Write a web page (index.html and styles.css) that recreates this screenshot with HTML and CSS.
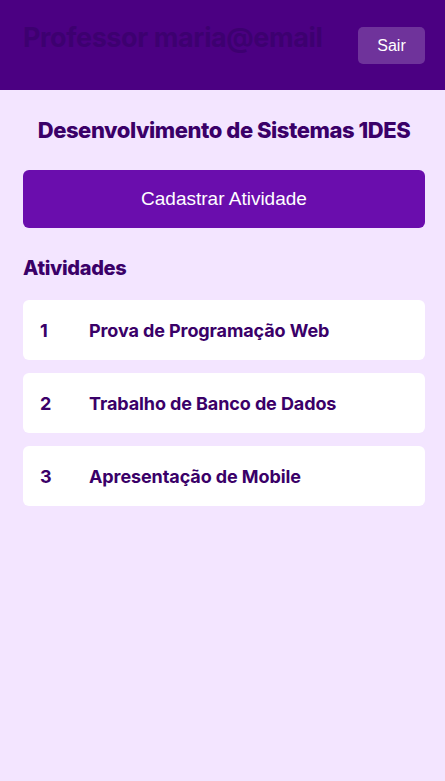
FILE: index.html
```html
<!DOCTYPE html>
<html lang="pt-BR">
<head>
<meta charset="utf-8">
<title>Professor</title>
<link rel="stylesheet" href="styles.css">
</head>
<body>
<header class="topbar">
  <h1 class="topbar-title">Professor maria@email</h1>
  <button class="btn-sair">Sair</button>
</header>
<main class="content">
  <h2 class="turma-title">Desenvolvimento de Sistemas 1DES</h2>
  <button class="btn-cadastrar">Cadastrar Atividade</button>
  <h3 class="section-title">Atividades</h3>
  <ul class="lista">
    <li class="card"><span class="card-num">1</span><span class="card-name">Prova de Programação Web</span></li>
    <li class="card"><span class="card-num">2</span><span class="card-name">Trabalho de Banco de Dados</span></li>
    <li class="card"><span class="card-num">3</span><span class="card-name">Apresentação de Mobile</span></li>
  </ul>
</main>
</body>
</html>
```
FILE: styles.css
```css
* { box-sizing: border-box; }
html, body { margin: 0; padding: 0; }
body {
  background: #f3e5ff;
  font-family: "Inter", "Noto Sans", sans-serif;
  min-height: 781px;
}
.topbar {
  background: #4b0082;
  height: 90px;
  display: flex;
  align-items: center;
  justify-content: space-between;
  padding: 0 20px 0 23px;
}
.topbar-title {
  margin: 0 0 16px 0;
  font-size: 27px;
  font-weight: 700;
  letter-spacing: -0.4px;
  color: #3d0070;
}
.btn-sair {
  width: 67px;
  height: 37px;
  border: none;
  border-radius: 5px;
  background: rgba(255,255,255,0.2);
  color: #fff;
  font-family: "Liberation Sans", Arial, sans-serif;
  font-size: 16px;
  margin-top: 1px;
}
.content {
  padding: 0 20px 0 23px;
  display: flex;
  flex-direction: column;
}
.turma-title {
  margin: 26px 0 0;
  text-align: center;
  font-size: 22px;
  font-weight: 800;
  letter-spacing: -0.45px;
  color: #3a0068;
  line-height: 28px;
}
.btn-cadastrar {
  margin-top: 26px;
  height: 58px;
  border: none;
  border-radius: 6px;
  background: #6a0dad;
  color: #fff;
  font-family: "Liberation Sans", Arial, sans-serif;
  font-size: 19px;
}
.section-title {
  margin: 28px 0 0;
  font-size: 20px;
  font-weight: 800;
  letter-spacing: -0.35px;
  color: #3a0068;
  line-height: 24px;
}
.lista {
  list-style: none;
  margin: 20px 0 0;
  padding: 0;
  display: flex;
  flex-direction: column;
  gap: 13px;
}
.card {
  background: #fff;
  border-radius: 6px;
  height: 60px;
  display: flex;
  align-items: center;
  padding-left: 17px;
  color: #3a0068;
  font-size: 18px;
  font-weight: 700;
  letter-spacing: -0.1px;
}
.card-num { width: 49px; }
```
